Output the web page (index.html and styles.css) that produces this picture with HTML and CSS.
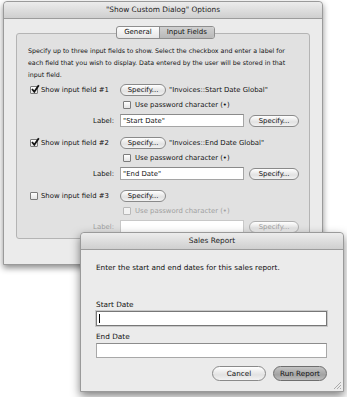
FILE: index.html
```html
<!DOCTYPE html>
<html>
<head>
<meta charset="utf-8">
<link rel="stylesheet" href="styles.css">
</head>
<body>
<div class="win main">
  <div class="titlebar">"Show Custom Dialog" Options</div>
  <div class="winbody">
    <div class="tabbox">
      <div class="tabs"><span class="tab">General</span><span class="tab sel">Input Fields</span></div>
      <p class="desc">Specify up to three input fields to show. Select the checkbox and enter a label for each field that you wish to display. Data entered by the user will be stored in that input field.</p>

      <div class="group">
        <div class="cola"><span class="cb on"><svg viewBox="0 0 10 10"><path d="M2 5 L4.3 7.8 L8.8 1.2" /></svg></span><span>Show input field #1</span></div>
        <div class="colb"><span class="btn sm">Specify...</span><span class="target">"Invoices::Start Date Global"</span></div>
        <div class="colb"><span class="cb"></span><span>Use password character (•)</span></div>
        <div class="cola right"><span>Label:</span></div>
        <div class="colb"><span class="input">"Start Date"</span><span class="btn">Specify...</span></div>
      </div>

      <div class="group">
        <div class="cola"><span class="cb on"><svg viewBox="0 0 10 10"><path d="M2 5 L4.3 7.8 L8.8 1.2" /></svg></span><span>Show input field #2</span></div>
        <div class="colb"><span class="btn sm">Specify...</span><span class="target">"Invoices::End Date Global"</span></div>
        <div class="colb"><span class="cb"></span><span>Use password character (•)</span></div>
        <div class="cola right"><span>Label:</span></div>
        <div class="colb"><span class="input">"End Date"</span><span class="btn">Specify...</span></div>
      </div>

      <div class="group">
        <div class="cola"><span class="cb"></span><span>Show input field #3</span></div>
        <div class="colb"><span class="btn sm">Specify...</span></div>
        <div class="colb dis"><span class="cb"></span><span>Use password character (•)</span></div>
        <div class="cola right dis"><span>Label:</span></div>
        <div class="colb dis"><span class="input"></span><span class="btn">Specify...</span></div>
      </div>
    </div>
  </div>
</div>

<div class="win report">
  <div class="titlebar">Sales Report</div>
  <div class="rbody">
    <p class="rdesc">Enter the start and end dates for this sales report.</p>
    <div class="flabel first">Start Date</div>
    <div class="rinput focus"><span class="caret"></span></div>
    <div class="flabel">End Date</div>
    <div class="rinput"></div>
    <div class="actions">
      <span class="btn big">Cancel</span>
      <span class="btn big default">Run Report</span>
    </div>
  </div>
  <svg class="grip" viewBox="0 0 8 8"><path d="M1 8 L8 1 M4 8 L8 4 M7 8 L8 7" /></svg>
</div>
</body>
</html>
```

FILE: styles.css
```css
* { box-sizing: border-box; }
html, body { margin: 0; padding: 0; background: #fff; }
body {
  width: 347px;
  height: 397px;
  overflow: hidden;
  position: relative;
  font-family: "DejaVu Sans", sans-serif;
  color: #111;
}
.win {
  background: #ebebeb;
  border: 1px solid #9a9a9a;
  border-radius: 4px 4px 0 0;
  box-shadow: 0 3px 6px rgba(0,0,0,0.45);
}
.main {
  margin: 1px 0 0 3px;
  width: 320px;
  height: 264px;
}
.titlebar {
  height: 17px;
  line-height: 16px;
  text-align: center;
  font-size: 7.4px;
  background: linear-gradient(#ececec, #cfcfcf);
  border-bottom: 1px solid #9c9c9c;
  border-radius: 4px 4px 0 0;
  color: #222;
}
.winbody {
  padding: 14px 12px 0 12px;
}
.tabbox {
  background: #e1e1e1;
  border: 1px solid #b4b4b4;
  border-radius: 3px;
  padding: 0 10px 4px 11px;
  display: flex;
  flex-direction: column;
  height: 206px;
}
.tabs {
  align-self: center;
  margin-top: -8px;
  margin-left: 4px;
  display: flex;
  height: 13px;
  border: 1px solid #8e8e8e;
  border-radius: 3px;
  background: linear-gradient(#fdfdfd, #e6e6e6);
  font-size: 7px;
  line-height: 11px;
}
.tab { padding: 0 7px; }
.tab.sel {
  background: linear-gradient(#d0d0d0, #b9b9b9);
  border-left: 1px solid #8e8e8e;
  border-radius: 0 2px 2px 0;
}
.desc {
  margin: 6px 0 1px 0;
  font-size: 6.3px;
  line-height: 12px;
}
.group {
  display: grid;
  grid-template-columns: 92px 1fr;
  grid-auto-rows: 15.5px;
  font-size: 6.9px;
  margin-bottom: 6.5px;
}
.group .colb { grid-column: 2; }
.group .cola { grid-column: 1; }
.cola, .colb { display: flex; align-items: center; }
.cola.right { justify-content: flex-end; padding-right: 6px; }
.cola .cb { margin: 0 3px 0 2px; }
.colb .cb { margin: 0 4px 0 3px; }
.cb {
  width: 8px;
  height: 8px;
  border: 1px solid #7c7c7c;
  border-radius: 1px;
  background: linear-gradient(#fff, #e4e4e4);
  position: relative;
  flex: none;
}
.cb svg {
  position: absolute;
  left: -1px;
  top: -3px;
  width: 10px;
  height: 10px;
  fill: none;
  stroke: #111;
  stroke-width: 1.8;
}
.btn {
  display: inline-flex;
  align-items: center;
  justify-content: center;
  height: 12px;
  border: 1px solid #8a8a8a;
  border-radius: 6px;
  background: linear-gradient(#ffffff, #e2e2e2 60%, #f2f2f2);
  padding: 0 5px;
  flex: none;
  font-size: 6.9px;
}
.btn.sm { width: 46px; }
.target { margin-left: 3px; }
.input {
  width: 124px;
  height: 13px;
  background: #fff;
  border: 1px solid #a5a5a5;
  border-top-color: #8a8a8a;
  padding-left: 2px;
  display: flex;
  align-items: center;
  margin-right: 5px;
}
.colb .input + .btn { width: 50px; }
.dis { color: #9f9f9f; }
.dis .cb { border-color: #b8b8b8; background: #f2f2f2; }
.dis .btn { color: #9f9f9f; border-color: #b0b0b0; }
.dis .input { border-color: #c8c8c8; }

.report {
  position: absolute;
  left: 80px;
  top: 232px;
  width: 264px;
  height: 160px;
  box-shadow: 0 4px 10px rgba(0,0,0,0.5);
}
.rbody {
  padding: 12px 16px 0 15px;
  display: flex;
  flex-direction: column;
  font-size: 7.3px;
}
.rdesc { margin: 0; line-height: 12px; }
.flabel { line-height: 12px; margin-top: 5px; }
.flabel.first { margin-top: 25px; }
.rinput {
  height: 15px;
  background: #fff;
  border: 1px solid #a8a8a8;
  border-top-color: #8c8c8c;
  position: relative;
}
.rinput.focus { border: 1px solid #777; box-shadow: 0 0 0 1px #c8c8c8; }
.caret {
  position: absolute;
  left: 2px;
  top: 2px;
  width: 1px;
  height: 9px;
  background: #000;
}
.actions {
  display: flex;
  justify-content: flex-end;
  gap: 7px;
  margin-top: 8px;
}
.btn.big {
  height: 15px;
  border-radius: 8px;
  font-size: 7.2px;
}
.actions .btn:first-child { width: 54px; }
.btn.default {
  width: 54px;
  background: linear-gradient(#c4c4c4, #a2a2a2 60%, #bdbdbd);
  border-color: #6e6e6e;
}
.grip {
  position: absolute;
  right: 2px;
  bottom: 2px;
  width: 8px;
  height: 8px;
  stroke: #9a9a9a;
  stroke-width: 0.8;
}
```
